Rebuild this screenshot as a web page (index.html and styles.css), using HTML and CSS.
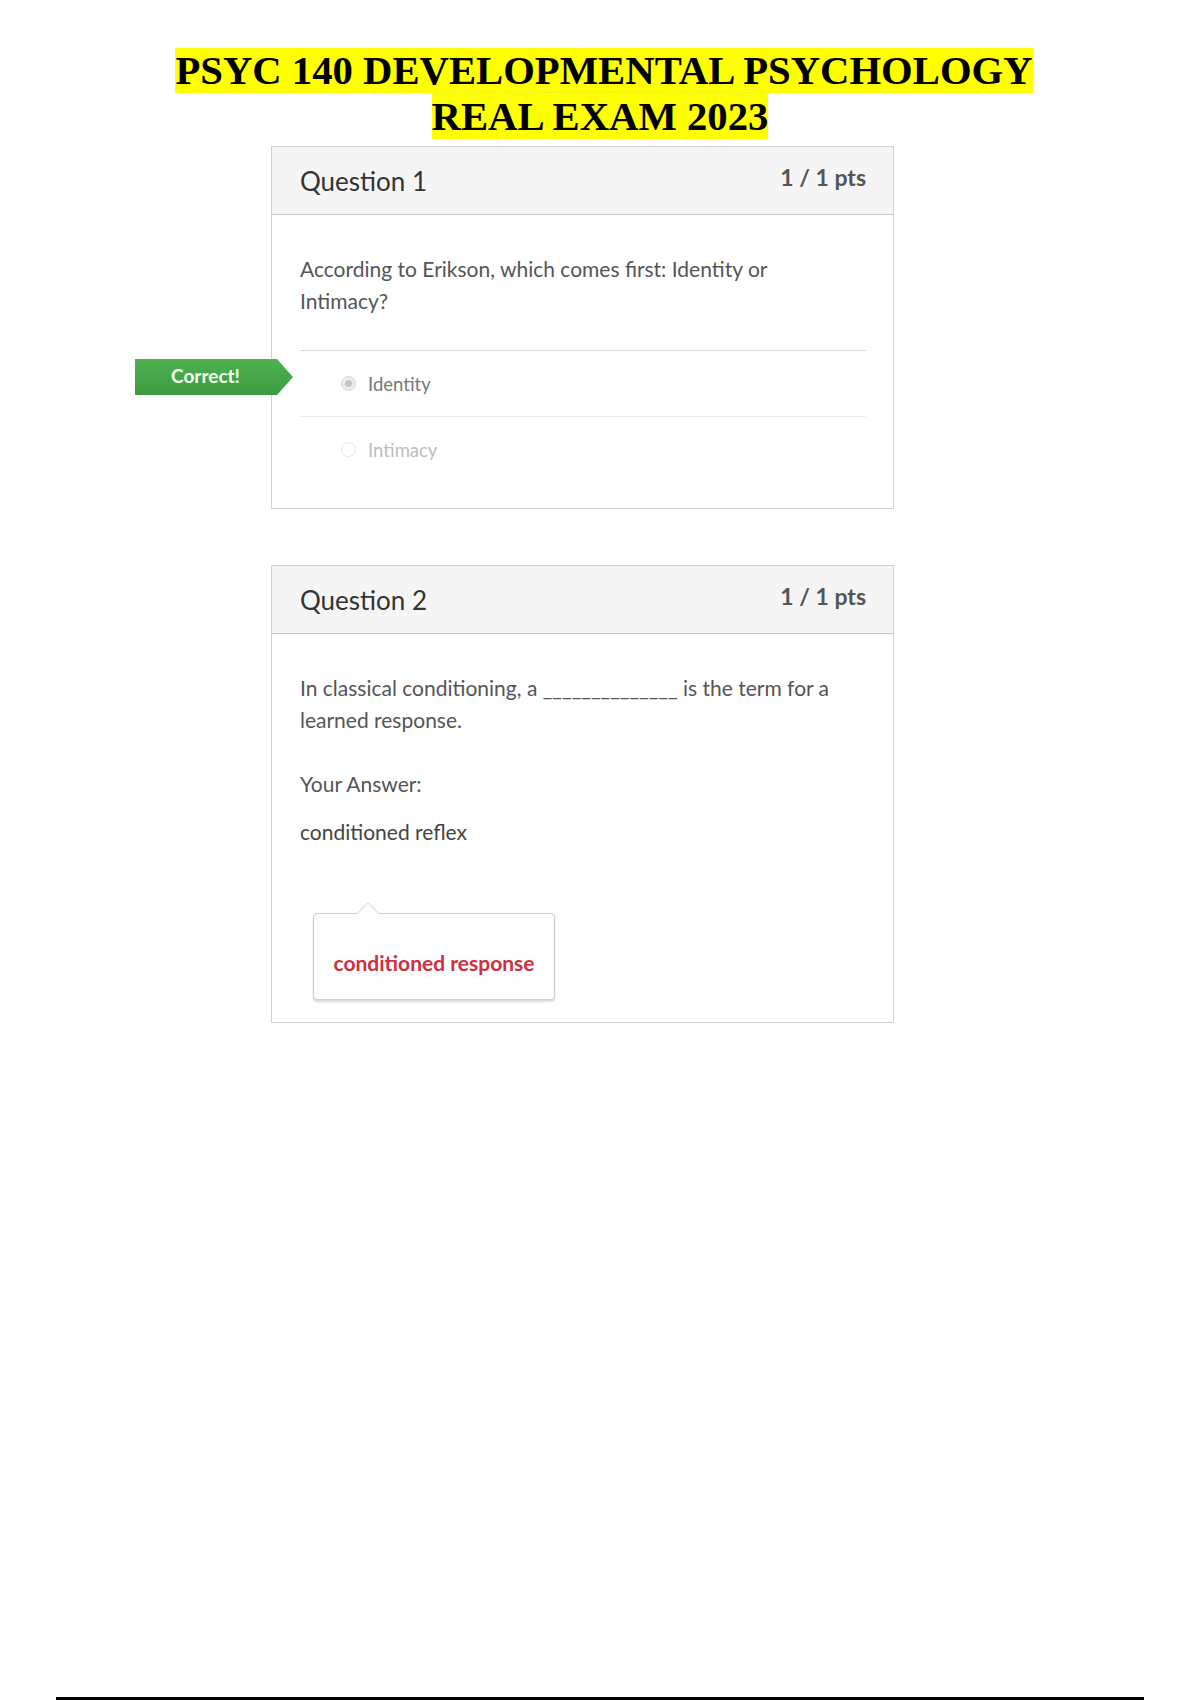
FILE: index.html
```html
<!DOCTYPE html>
<html lang="en">
<head>
    <meta charset="UTF-8">
    <meta name="viewport" content="width=device-width, initial-scale=1.0">
    <title>PSYC 140 Developmental Psychology Real Exam 2023</title>
    <link rel="stylesheet" href="styles.css">
</head>
<body>
    <div class="page">
        <h1 class="titulo"><span class="marca primeira">PSYC 140 DEVELOPMENTAL PSYCHOLOGY</span><br><span class="marca">REAL EXAM 2023</span></h1>

        <div class="questoes">
            <div class="card">
                <div class="card-header">
                    <span class="card-titulo">Question 1</span>
                    <span class="pontos">1 / 1 pts</span>
                </div>
                <div class="card-body">
                    <p class="pergunta">According to Erikson, which comes first: Identity or<br>Intimacy?</p>
                    <div class="opcoes">
                        <div class="opcao selecionada">
                            <span class="correto">Correct!</span>
                            <span class="radio marcado"></span>
                            <span class="opcao-texto">Identity</span>
                        </div>
                        <div class="opcao">
                            <span class="radio"></span>
                            <span class="opcao-texto">Intimacy</span>
                        </div>
                    </div>
                </div>
            </div>

            <div class="card">
                <div class="card-header">
                    <span class="card-titulo">Question 2</span>
                    <span class="pontos">1 / 1 pts</span>
                </div>
                <div class="card-body ultima">
                    <p class="pergunta">In classical conditioning, a ______________ is the term for a<br>learned response.</p>
                    <p class="rotulo">Your Answer:</p>
                    <p class="resposta">conditioned reflex</p>
                    <div class="balao">
                        <span class="balao-texto">conditioned response</span>
                    </div>
                </div>
            </div>
        </div>

        <div class="rodape"></div>
    </div>
</body>
</html>
```

FILE: styles.css
```css
body {
    margin: 0;
    background-color: #fff;
    font-family: 'Lato', 'Liberation Sans', sans-serif;
}
.page {
    width: 1200px;
    height: 1700px;
    display: flex;
    flex-direction: column;
}
.titulo {
    font-family: 'Liberation Serif', serif;
    font-weight: bold;
    font-size: 40.7px;
    line-height: 46px;
    text-align: center;
    margin: 48px 0 0 0;
    color: #000;
}
.marca {
    background-color: #ffff00;
}
.marca.primeira {
    margin-left: 8px;
}
.questoes {
    padding-left: 271px;
    margin-top: 6px;
}
.card {
    width: 621px;
    border: 1px solid #cfd3d6;
    margin-bottom: 56px;
    background: #fff;
}
.card-header {
    height: 67px;
    background-color: #f5f5f5;
    border-bottom: 1px solid #c3c7ca;
    padding: 0 27px 0 28px;
    display: flex;
    justify-content: space-between;
    align-items: center;
}
.card-titulo {
    font-size: 26px;
    color: #333;
}
.pontos {
    font-size: 23px;
    font-weight: bold;
    color: #555;
    margin-top: -7px;
}
.card-body {
    padding: 38px 27px 26px 28px;
}
.card-body.ultima {
    padding-bottom: 22px;
}
.pergunta {
    margin: 0;
    font-size: 21px;
    line-height: 32px;
    color: #555;
}
.opcoes {
    margin-top: 33px;
    border-top: 1px solid #dcdcdc;
}
.opcao {
    position: relative;
    height: 65px;
    display: flex;
    align-items: center;
    padding-left: 41px;
    font-size: 18.5px;
}
.opcao.selecionada {
    border-bottom: 1px solid #eeeeee;
}
.opcao-texto {
    color: #bdbdbd;
}
.selecionada .opcao-texto {
    color: #777;
}
.radio {
    width: 15px;
    height: 15px;
    border-radius: 50%;
    border: 1px solid #e6e6e6;
    box-sizing: border-box;
    margin-right: 12px;
    background: #fff;
}
.radio.marcado {
    border: 1px solid #d6d6d6;
    background: radial-gradient(circle, #c4c4c4 0 3px, #ececec 4px);
}
.correto {
    position: absolute;
    left: -165px;
    top: 8px;
    width: 141px;
    height: 36px;
    line-height: 34px;
    padding-right: 17px;
    box-sizing: content-box;
    text-align: center;
    font-size: 19px;
    font-weight: bold;
    color: #f2fff2;
    background: linear-gradient(#4fb152, #3e9b41);
    clip-path: polygon(0 0, calc(100% - 16px) 0, 100% 50%, calc(100% - 16px) 100%, 0 100%);
}
.rotulo {
    margin: 32px 0 0 0;
    font-size: 21px;
    line-height: 32px;
    color: #555;
}
.resposta {
    margin: 16px 0 0 0;
    font-size: 21px;
    line-height: 32px;
    color: #444;
}
.balao {
    position: relative;
    width: 240px;
    height: 85px;
    margin: 65px 0 0 13px;
    border: 1px solid #cfcfcf;
    border-radius: 4px;
    background: #fdfdfd;
    box-shadow: 0 2px 2px rgba(0, 0, 0, 0.15);
    display: flex;
    align-items: flex-end;
    justify-content: center;
}
.balao::before {
    content: "";
    position: absolute;
    top: -12px;
    left: 42px;
    border-left: 12px solid transparent;
    border-right: 12px solid transparent;
    border-bottom: 12px solid #cfcfcf;
}
.balao::after {
    content: "";
    position: absolute;
    top: -11px;
    left: 43px;
    border-left: 11px solid transparent;
    border-right: 11px solid transparent;
    border-bottom: 11px solid #fdfdfd;
}
.balao-texto {
    font-size: 21px;
    font-weight: bold;
    color: #cf2f40;
    margin-bottom: 24px;
}
.rodape {
    margin: auto 56px 0 56px;
    height: 3px;
    background: #000;
}
```
